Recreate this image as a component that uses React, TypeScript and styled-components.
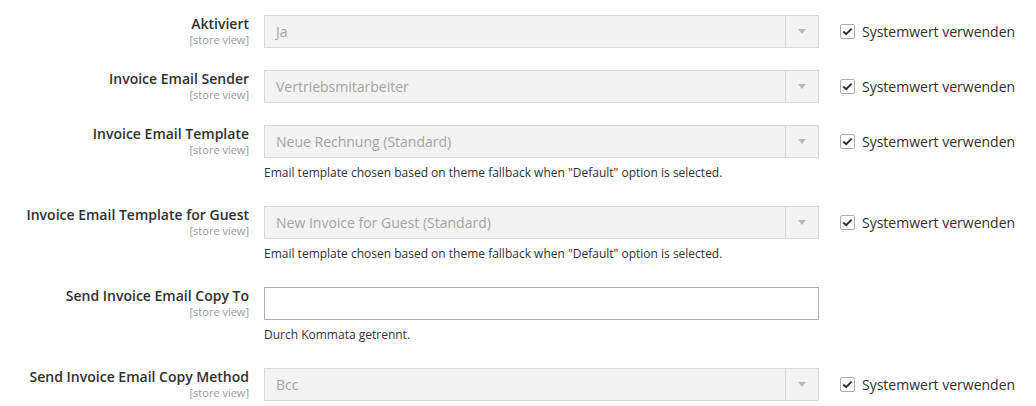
import React from "react";
import styled, { createGlobalStyle } from "styled-components";

const Global = createGlobalStyle`
  html, body { margin: 0; padding: 0; background: #ffffff; }
  body { font-family: "Open Sans", "Noto Sans", sans-serif; color: #303030; }
  * { box-sizing: border-box; }
`;

const Form = styled.div`
  display: flex;
  flex-direction: column;
  gap: 22px;
  padding-top: 15px;
`;

const Row = styled.div`
  display: grid;
  grid-template-columns: 249px 555px auto;
  column-gap: 15px;
  align-items: start;
`;

const LabelCol = styled.div`
  display: flex;
  flex-direction: column;
  align-items: flex-end;
  text-align: right;
`;

const LabelText = styled.span`
  font-size: 14px;
  font-weight: 600;
  line-height: 18px;
  color: #303030;
  white-space: nowrap;
`;

const Scope = styled.span`
  font-size: 11px;
  line-height: 14px;
  color: #999999;
`;

const Control = styled.div`
  display: flex;
  flex-direction: column;
`;

const SelectBox = styled.div`
  height: 33px;
  display: flex;
  align-items: stretch;
  background: #f3f3f3;
  border: 1px solid #d8d8d8;
`;

const SelectValue = styled.div`
  flex: 1;
  display: flex;
  align-items: center;
  padding-left: 11px;
  font-size: 14px;
  color: #a3a3a3;
`;

const ArrowCell = styled.div`
  width: 33px;
  border-left: 1px solid #d8d8d8;
  display: flex;
  align-items: center;
  justify-content: center;
`;

const Arrow = styled.span`
  width: 0;
  height: 0;
  border-left: 4px solid transparent;
  border-right: 4px solid transparent;
  border-top: 5px solid #b8b8b8;
`;

const TextInput = styled.input`
  height: 33px;
  width: 100%;
  border: 1px solid #adadad;
  background: #ffffff;
  font-family: inherit;
  font-size: 14px;
  padding: 0 11px;
  outline: none;
`;

const Note = styled.div`
  margin-top: 3px;
  font-size: 12px;
  line-height: 23px;
  color: #303030;
`;

const UseDefault = styled.label`
  display: flex;
  align-items: center;
  gap: 7px;
  height: 33px;
  margin-left: 6px;
  font-size: 14px;
  color: #303030;
  white-space: nowrap;
`;

const Box = styled.span`
  width: 15px;
  height: 15px;
  border: 1px solid #adadad;
  border-radius: 2px;
  background: #fff;
  display: flex;
  align-items: center;
  justify-content: center;
`;

const Check = () => (
  <Box>
    <svg width="11" height="9" viewBox="0 0 11 9">
      <path d="M1.3 4.6 L4.1 7.2 L9.7 1.6" fill="none" stroke="#303030" strokeWidth="2" />
    </svg>
  </Box>
);

type Field = {
  label: string;
  value?: string;
  input?: boolean;
  note?: string;
  useDefault: boolean;
};

const fields: Field[] = [
  { label: "Aktiviert", value: "Ja", useDefault: true },
  { label: "Invoice Email Sender", value: "Vertriebsmitarbeiter", useDefault: true },
  {
    label: "Invoice Email Template",
    value: "Neue Rechnung (Standard)",
    note: 'Email template chosen based on theme fallback when "Default" option is selected.',
    useDefault: true,
  },
  {
    label: "Invoice Email Template for Guest",
    value: "New Invoice for Guest (Standard)",
    note: 'Email template chosen based on theme fallback when "Default" option is selected.',
    useDefault: true,
  },
  { label: "Send Invoice Email Copy To", input: true, note: "Durch Kommata getrennt.", useDefault: false },
  { label: "Send Invoice Email Copy Method", value: "Bcc", useDefault: true },
];

export default function App() {
  return (
    <>
      <Global />
      <Form>
        {fields.map((f) => (
          <Row key={f.label}>
            <LabelCol>
              <LabelText>{f.label}</LabelText>
              <Scope>[store view]</Scope>
            </LabelCol>
            <Control>
              {f.input ? (
                <TextInput type="text" defaultValue="" />
              ) : (
                <SelectBox>
                  <SelectValue>{f.value}</SelectValue>
                  <ArrowCell>
                    <Arrow />
                  </ArrowCell>
                </SelectBox>
              )}
              {f.note && <Note>{f.note}</Note>}
            </Control>
            <div>
              {f.useDefault && (
                <UseDefault>
                  <Check />
                  Systemwert verwenden
                </UseDefault>
              )}
            </div>
          </Row>
        ))}
      </Form>
    </>
  );
}
